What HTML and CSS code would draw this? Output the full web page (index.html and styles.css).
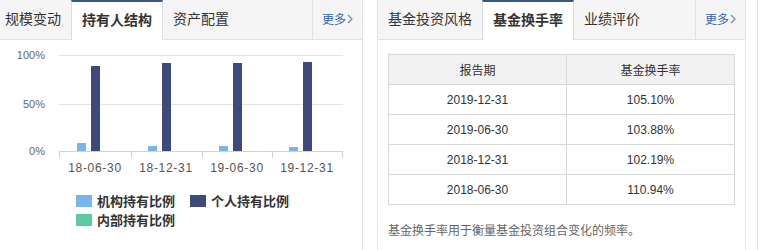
FILE: index.html
```html
<!DOCTYPE html>
<html lang="zh-CN">
<head>
  <meta charset="utf-8">
  <title>基金档案</title>
  <link rel="stylesheet" href="styles.css">
</head>
<body>

  <div class="page">

    <!-- 持有人结构 -->
    <div class="panel first">
      <div class="tabs">
        <a class="tab">规模变动</a>
        <a class="tab active">持有人结构</a>
        <a class="tab">资产配置</a>
        <a class="more">更多<svg class="chev" width="6" height="10" viewBox="0 0 6 10"><path d="M1 1 L5 5 L1 9" fill="none" stroke="#6a8cc0" stroke-width="1.2"/></svg></a>
      </div>
      <div class="chart">
        <svg class="bars" width="362" height="145" viewBox="5 0 362 145">
          <g class="grid">
            <line x1="64" y1="15.5" x2="348" y2="15.5"/>
            <line x1="64" y1="64.5" x2="348" y2="64.5"/>
          </g>
          <g class="ylabels">
            <text x="50" y="19">100%</text>
            <text x="50" y="68">50%</text>
            <text x="50" y="115">0%</text>
          </g>
          <g class="inst">
            <rect x="82" y="103" width="9" height="8"/>
            <rect x="153" y="106" width="9" height="5"/>
            <rect x="224" y="106" width="9" height="5"/>
            <rect x="294" y="107" width="9" height="4"/>
          </g>
          <g class="pers">
            <rect x="96" y="26" width="9" height="85"/>
            <rect x="167" y="23" width="9" height="88"/>
            <rect x="238" y="23" width="9" height="88"/>
            <rect x="308" y="22" width="9" height="89"/>
          </g>
          <g class="axis">
            <line x1="64" y1="111.5" x2="348" y2="111.5"/>
            <line x1="64.5" y1="111" x2="64.5" y2="118"/>
            <line x1="136.5" y1="111" x2="136.5" y2="118"/>
            <line x1="207.5" y1="111" x2="207.5" y2="118"/>
            <line x1="277.5" y1="111" x2="277.5" y2="118"/>
            <line x1="347.5" y1="111" x2="347.5" y2="118"/>
          </g>
          <g class="xlabels">
            <text x="100" y="132">18-06-30</text>
            <text x="171" y="132">18-12-31</text>
            <text x="242" y="132">19-06-30</text>
            <text x="312" y="132">19-12-31</text>
          </g>
        </svg>
        <div class="legend">
          <div class="legend-item"><span class="swatch inst-color"></span>机构持有比例</div>
          <div class="legend-item"><span class="swatch pers-color"></span>个人持有比例</div>
          <div class="legend-item"><span class="swatch inner-color"></span>内部持有比例</div>
        </div>
      </div>
    </div>

    <!-- 基金换手率 -->
    <div class="panel">
      <div class="tabs">
        <a class="tab">基金投资风格</a>
        <a class="tab active">基金换手率</a>
        <a class="tab">业绩评价</a>
        <a class="more">更多<svg class="chev" width="6" height="10" viewBox="0 0 6 10"><path d="M1 1 L5 5 L1 9" fill="none" stroke="#6a8cc0" stroke-width="1.2"/></svg></a>
      </div>
      <div class="turnover">
        <table>
          <tr><th class="col-date">报告期</th><th>基金换手率</th></tr>
          <tr><td>2019-12-31</td><td>105.10%</td></tr>
          <tr><td>2019-06-30</td><td>103.88%</td></tr>
          <tr><td>2018-12-31</td><td>102.19%</td></tr>
          <tr><td>2018-06-30</td><td>110.94%</td></tr>
        </table>
        <p class="note">基金换手率用于衡量基金投资组合变化的频率。</p>
      </div>
    </div>

    <div class="panel edge"></div>

  </div>

</body>
</html>
```

FILE: styles.css
```css
* {
  font-family: "Liberation Sans", "Noto Sans CJK SC", sans-serif;
  box-sizing: border-box;
}

body {
  margin: 0;
  overflow: hidden;
  background: #fff;
}

.page {
  display: flex;
  gap: 14px;
  width: 763px;
  height: 250px;
  overflow: hidden;
}

.panel {
  width: 369px;
  height: 250px;
  flex-shrink: 0;
  border-left: 1px solid #e4e4e4;
  border-right: 1px solid #e4e4e4;
}

.panel.first {
  width: 363px;
  border-left: none;
}

.panel.first .tab:first-child {
  padding-left: 5px;
}

.panel.edge {
  width: 6px;
  margin-left: -3px;
  border-right: none;
}

/* tab bar */
.tabs {
  display: flex;
  height: 40px;
  background: #f5f5f5;
  border-bottom: 1px solid #e2e2e2;
}

.tab {
  padding: 0 10px;
  line-height: 39px;
  font-size: 14px;
  color: #333;
  cursor: pointer;
}

.tab.active {
  background: #fff;
  font-weight: bold;
  border-top: 2px solid #3a5688;
  border-left: 1px solid #dcdcdc;
  border-right: 1px solid #dcdcdc;
  line-height: 37px;
  height: 40px;
}

.more {
  margin-left: auto;
  width: 50px;
  padding-left: 9px;
  border-left: 1px solid #e2e2e2;
  display: flex;
  align-items: center;
  font-size: 12px;
  color: #3466b0;
  padding-bottom: 2px;
}

.chev {
  margin-left: 1px;
}

/* chart */
.bars {
  display: block;
}

.grid line {
  stroke: #e4e4e4;
  stroke-width: 1;
}

.axis line {
  stroke: #c9d3e6;
  stroke-width: 1;
}

.ylabels text {
  font-size: 11px;
  fill: #666;
  text-anchor: end;
}

.xlabels text {
  font-size: 12px;
  fill: #555;
  text-anchor: middle;
  letter-spacing: 0.7px;
}

.inst rect {
  fill: #77b5ea;
}

.pers rect {
  fill: #3e4a7b;
}

.legend {
  display: flex;
  flex-wrap: wrap;
  width: 310px;
  margin-top: 6px;
  padding-left: 76px;
}

.legend-item {
  width: 114px;
  height: 19px;
  display: flex;
  align-items: center;
  gap: 5px;
  font-size: 13px;
  font-weight: bold;
  color: #333;
}

.swatch {
  width: 16px;
  height: 12px;
}

.inst-color {
  background: #77b5ea;
}

.pers-color {
  background: #3e4a7b;
}

.inner-color {
  background: #5fcaa0;
}

/* turnover table */
.turnover {
  padding: 14px 0 0 10px;
}

table {
  width: 347px;
  border-collapse: collapse;
}

th, td {
  height: 30px;
  border: 1px solid #d8d8d8;
  text-align: center;
  font-size: 12px;
  font-weight: normal;
  color: #333;
}

th {
  background: #f2f2f2;
}

.col-date {
  width: 178px;
}

.note {
  margin: 16px 0 0;
  font-size: 12px;
  color: #666;
}
```
